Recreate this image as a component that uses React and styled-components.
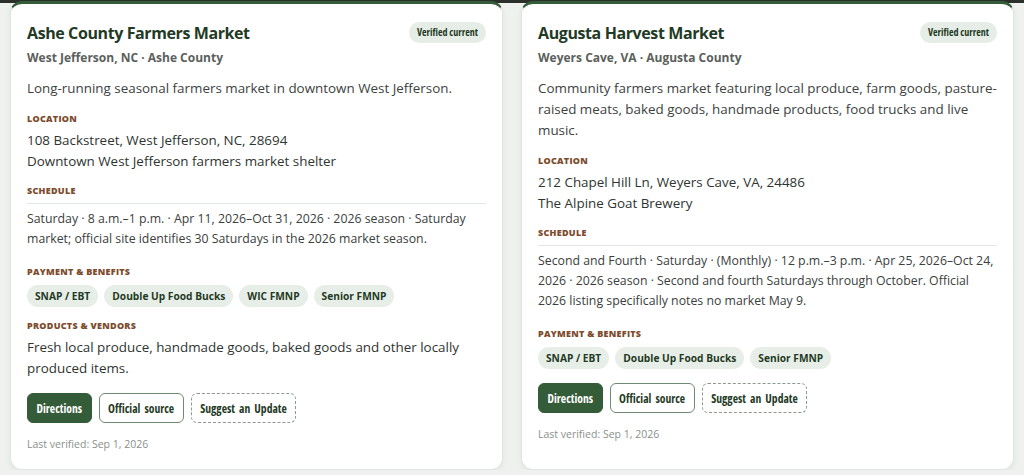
import React from "react";
import styled, { createGlobalStyle } from "styled-components";

const Global = createGlobalStyle`
  html, body { margin: 0; padding: 0; background: #eef1ee; }
  body { font-family: "Open Sans", sans-serif; }
  * { box-sizing: border-box; }
`;

const Strip = styled.div`
  height: 3px;
  background: #2c302d;
`;

const Grid = styled.div`
  display: grid;
  grid-template-columns: 1fr 1fr;
  align-items: stretch;
  gap: 18px;
  padding: 0 10px;
  margin-top: -2px;
`;

const Card = styled.article`
  background: #fff;
  border: 1px solid #dfe5df;
  border-top: 3px solid #355c39;
  border-radius: 12px;
  box-shadow: 0 2px 6px rgba(30, 50, 30, 0.06);
  padding: 16px 16px 17px;
  display: flex;
  flex-direction: column;
`;

const Head = styled.div`
  display: flex;
  align-items: flex-start;
  justify-content: space-between;
  gap: 12px;
`;

const Title = styled.h2`
  margin: 0;
  font-size: 16px;
  line-height: 26px;
  font-weight: 700;
  letter-spacing: -0.4px;
  color: #1f3a25;
`;

const Badge = styled.span`
  flex: none;
  margin-top: 2px;
  background: #e6ede6;
  color: #1f3a25;
  border-radius: 999px;
  padding: 4px 8px;
  font-size: 10px;
  line-height: 13px;
  font-weight: 700;
  font-stretch: 87.5%;
`;

const Sub = styled.div`
  margin-top: 3px;
  font-size: 12px;
  line-height: 18px;
  font-weight: 700;
  color: #5a605b;
`;

const Desc = styled.p`
  margin: 11px 0 0;
  font-size: 13.4px;
  line-height: 21px;
  color: #3d423e;
`;

const Label = styled.div`
  margin-top: ${(p) => p.$mt || 12}px;
  font-size: 9px;
  line-height: 14px;
  font-weight: 800;
  letter-spacing: 0.03em;
  text-transform: uppercase;
  color: #7c4b2c;
`;

const Body = styled.div`
  margin-top: 4px;
  font-size: 13.4px;
  line-height: 21px;
  color: #2f3430;
`;

const Schedule = styled.div`
  margin-top: 5px;
  border-top: 1px solid #e4e8e4;
  padding-top: 5px;
  font-size: 12.3px;
  line-height: 20px;
  color: #3b403c;
`;

const Chips = styled.div`
  margin-top: 6px;
  display: flex;
  flex-wrap: wrap;
  gap: 6px;
`;

const Chip = styled.span`
  background: #e7eee7;
  color: #1f3a25;
  border-radius: 999px;
  padding: 3px 8px;
  font-size: 10.2px;
  line-height: 16px;
  font-weight: 700;
`;

const Actions = styled.div`
  margin-top: 14px;
  display: flex;
  gap: 7px;
`;

const Button = styled.a`
  display: inline-flex;
  align-items: center;
  height: 30px;
  padding: 0 8.5px;
  border-radius: 6px;
  font-size: 11.6px;
  font-weight: 700;
  font-stretch: 87.5%;
  word-spacing: 2px;
  text-decoration: none;
  cursor: pointer;
  ${(p) =>
    p.$variant === "primary"
      ? "background:#355c39;color:#fff;border:1px solid #355c39;"
      : p.$variant === "dashed"
      ? "background:#fff;color:#1f3a25;border:1px dashed #8a9a8c;"
      : "background:#fff;color:#1f3a25;border:1px solid #6f8a72;"}
`;

const Verified = styled.div`
  margin-top: 13px;
  font-size: 10.5px;
  line-height: 16px;
  color: #8a8f8b;
`;

const markets = [
  {
    name: "Ashe County Farmers Market",
    place: "West Jefferson, NC · Ashe County",
    desc: "Long-running seasonal farmers market in downtown West Jefferson.",
    location: ["108 Backstreet, West Jefferson, NC, 28694", "Downtown West Jefferson farmers market shelter"],
    schedule:
      "Saturday · 8 a.m.–1 p.m. · Apr 11, 2026–Oct 31, 2026 · 2026 season · Saturday market; official site identifies 30 Saturdays in the 2026 market season.",
    payments: ["SNAP / EBT", "Double Up Food Bucks", "WIC FMNP", "Senior FMNP"],
    products: "Fresh local produce, handmade goods, baked goods and other locally produced items.",
    verified: "Sep 1, 2026",
  },
  {
    name: "Augusta Harvest Market",
    place: "Weyers Cave, VA · Augusta County",
    desc: "Community farmers market featuring local produce, farm goods, pasture-raised meats, baked goods, handmade products, food trucks and live music.",
    location: ["212 Chapel Hill Ln, Weyers Cave, VA, 24486", "The Alpine Goat Brewery"],
    schedule:
      "Second and Fourth · Saturday · (Monthly) · 12 p.m.–3 p.m. · Apr 25, 2026–Oct 24, 2026 · 2026 season · Second and fourth Saturdays through October. Official 2026 listing specifically notes no market May 9.",
    payments: ["SNAP / EBT", "Double Up Food Bucks", "Senior FMNP"],
    products: null,
    verified: "Sep 1, 2026",
  },
];

function MarketCard({ m }) {
  return (
    <Card>
      <Head>
        <Title>{m.name}</Title>
        <Badge>Verified current</Badge>
      </Head>
      <Sub>{m.place}</Sub>
      <Desc>{m.desc}</Desc>
      <Label $mt={13}>Location</Label>
      <Body>
        {m.location.map((l) => (
          <div key={l}>{l}</div>
        ))}
      </Body>
      <Label $mt={12}>Schedule</Label>
      <Schedule>{m.schedule}</Schedule>
      <Label $mt={16}>Payment &amp; Benefits</Label>
      <Chips>
        {m.payments.map((p) => (
          <Chip key={p}>{p}</Chip>
        ))}
      </Chips>
      {m.products && (
        <>
          <Label $mt={12}>Products &amp; Vendors</Label>
          <Body>{m.products}</Body>
        </>
      )}
      <Actions>
        <Button $variant="primary">Directions</Button>
        <Button>Official source</Button>
        <Button $variant="dashed">Suggest an Update</Button>
      </Actions>
      <Verified>Last verified: {m.verified}</Verified>
    </Card>
  );
}

export default function App() {
  return (
    <>
      <Global />
      <Strip />
      <Grid>
        {markets.map((m) => (
          <MarketCard key={m.name} m={m} />
        ))}
      </Grid>
    </>
  );
}
